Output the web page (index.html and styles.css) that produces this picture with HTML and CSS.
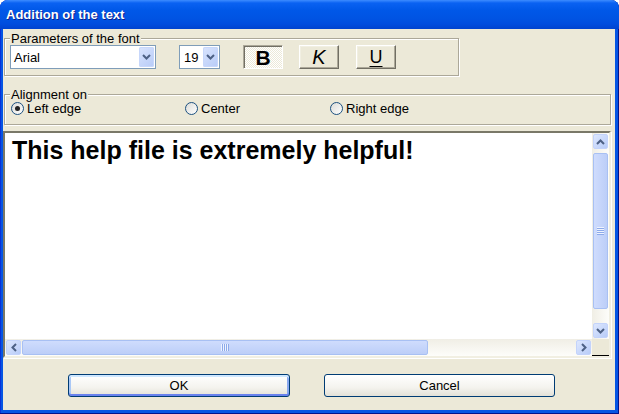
FILE: index.html
```html
<!DOCTYPE html>
<html lang="en">
<head>
  <meta charset="UTF-8">
  <title>Addition of the text</title>
  <link rel="stylesheet" href="styles.css">
</head>
<body>

  <div class="window">
    <div class="titlebar">Addition of the text</div>

    <div class="client">

      <fieldset class="group group-font">
        <legend>Parameters of the font</legend>
        <div class="font-row">
          <div class="combo combo-face">
            <span class="combo-value">Arial</span>
            <span class="combo-btn">
              <svg width="9" height="6" viewBox="0 0 9 6"><polyline points="1,1 4.5,4.5 8,1" fill="none" stroke="#4d6185" stroke-width="2"/></svg>
            </span>
          </div>
          <div class="combo combo-size">
            <span class="combo-value">19</span>
            <span class="combo-btn">
              <svg width="9" height="6" viewBox="0 0 9 6"><polyline points="1,1 4.5,4.5 8,1" fill="none" stroke="#4d6185" stroke-width="2"/></svg>
            </span>
          </div>
          <button class="tool tool-on tool-bold">B</button>
          <button class="tool tool-italic">K</button>
          <button class="tool tool-under">U</button>
        </div>
      </fieldset>

      <fieldset class="group group-align">
        <legend>Alignment on</legend>
        <div class="align-row">
          <label class="opt opt-left"><span class="radio checked"></span>Left edge</label>
          <label class="opt opt-center"><span class="radio"></span>Center</label>
          <label class="opt"><span class="radio"></span>Right edge</label>
        </div>
      </fieldset>

      <div class="editor">
        <div class="editor-text">This help file is extremely helpful!</div>

        <div class="vscroll">
          <span class="sb-btn">
            <svg width="9" height="6" viewBox="0 0 9 6"><polyline points="1,5 4.5,1.5 8,5" fill="none" stroke="#4d6185" stroke-width="2"/></svg>
          </span>
          <div class="vtrack">
            <div class="thumb vthumb"><span class="grip-v"></span></div>
          </div>
          <span class="sb-btn">
            <svg width="9" height="6" viewBox="0 0 9 6"><polyline points="1,1 4.5,4.5 8,1" fill="none" stroke="#4d6185" stroke-width="2"/></svg>
          </span>
        </div>

        <div class="hscroll">
          <span class="sb-btn">
            <svg width="6" height="9" viewBox="0 0 6 9"><polyline points="5,1 1.5,4.5 5,8" fill="none" stroke="#4d6185" stroke-width="2"/></svg>
          </span>
          <div class="htrack">
            <div class="thumb hthumb"><span class="grip-h"></span></div>
          </div>
          <span class="sb-btn">
            <svg width="6" height="9" viewBox="0 0 6 9"><polyline points="1,1 4.5,4.5 1,8" fill="none" stroke="#4d6185" stroke-width="2"/></svg>
          </span>
        </div>

        <div class="corner"></div>
      </div>

      <div class="actions">
        <button class="push push-ok">OK</button>
        <button class="push push-cancel">Cancel</button>
      </div>

    </div>
  </div>

</body>
</html>
```

FILE: styles.css
```css
body {
  margin: 0;
  background: #ffffff;
  font-family: 'Liberation Sans', Arial, sans-serif;
  font-size: 13px;
  color: #000;
}

button {
  font: inherit;
  color: inherit;
  padding: 0;
  margin: 0;
}

.window {
  width: 619px;
  height: 414px;
  display: flex;
  flex-direction: column;
  background: #0555e3;
  border-radius: 8px 8px 0 0;
  overflow: hidden;
  box-shadow: inset 0 -1px 0 #00138c, inset 1px 0 0 #0831d9, inset -1px 0 0 #00138c;
}

.titlebar {
  flex: none;
  height: 29px;
  padding-left: 6px;
  display: flex;
  align-items: center;
  color: #fff;
  font-weight: bold;
  font-size: 13px;
  text-shadow: 1px 1px 0 #0f1e8a;
  background: linear-gradient(to bottom, #3d8cff 0, #0a62f2 3px, #0058e8 10px, #0054e3 18px, #004dde 24px, #0043cf 29px);
}

.client {
  flex: 1;
  margin: 0 4px 4px 3px;
  background: #ece9d8;
  display: flex;
  flex-direction: column;
  align-items: flex-start;
  padding-top: 3px;
}

/* Group boxes */
.group {
  margin: 0 0 0 1px;
  padding: 0 5px 6px;
  border: 1px solid #aca899;
  box-shadow: inset 1px 1px 0 #fff, 1px 1px 0 #fff;
  min-inline-size: 0;
  box-sizing: border-box;
}

.group legend {
  padding: 0 1px;
  line-height: 13px;
  background: #ece9d8;
}

.group-font {
  width: 455px;
}

.group-align {
  width: 607px;
  margin-top: 12px;
  padding-bottom: 8px;
}

/* Font row */
.font-row {
  display: flex;
  align-items: center;
  height: 24px;
}

.combo {
  height: 24px;
  box-sizing: border-box;
  border: 1px solid #7f9db9;
  background: #fff;
  display: flex;
  align-items: center;
}

.combo-face {
  width: 146px;
}

.combo-size {
  width: 41px;
  margin-left: 23px;
}

.combo-value {
  flex: 1;
  padding-left: 3px;
}

.combo-size .combo-value {
  padding-left: 4px;
}

.combo-btn {
  width: 15px;
  height: 20px;
  margin-right: 1px;
  border-radius: 2px;
  background: linear-gradient(135deg, #d9e4fd, #b7cbf8);
  box-shadow: inset 0 0 0 1px #c7d7fb;
  display: flex;
  align-items: center;
  justify-content: center;
}

.tool {
  width: 40px;
  height: 24px;
  box-sizing: border-box;
  background: #ece9d8;
  border: 1px solid;
  border-color: #fff #716f64 #716f64 #fff;
  box-shadow: inset -1px -1px 0 #aca899, inset 1px 1px 0 #f1efe2;
  display: flex;
  align-items: center;
  justify-content: center;
}

.tool-on {
  margin-left: 23px;
  border-color: #aca899 #fff #fff #aca899;
  box-shadow: inset 1px 1px 0 #716f64;
  background: repeating-conic-gradient(#ffffff 0 25%, #ece9d8 0 50%) 0 0 / 2px 2px;
}

.tool-bold {
  font-weight: bold;
  font-size: 21px;
  padding-top: 1px;
}

.tool-italic {
  margin-left: 16px;
  font-style: italic;
  font-size: 20px;
}

.tool-under {
  margin-left: 17px;
  font-size: 18px;
  text-decoration: underline;
  text-underline-offset: 3px;
}

/* Alignment */
.align-row {
  display: flex;
  line-height: 15px;
}

.opt {
  display: flex;
  align-items: center;
  margin-left: 1px;
}

.opt-left {
  width: 174px;
}

.opt-center {
  width: 145px;
  margin-left: 0;
}

.opt + .opt {
  margin-left: 0;
}

.radio {
  width: 13px;
  height: 13px;
  box-sizing: border-box;
  margin-right: 3px;
  border: 1px solid #1c5180;
  border-radius: 50%;
  background: linear-gradient(135deg, #dcdcd7, #ffffff);
  display: flex;
  align-items: center;
  justify-content: center;
}

.radio.checked::after {
  content: "";
  width: 5px;
  height: 5px;
  border-radius: 50%;
  background: #222;
}

/* Editor with scrollbars */
.editor {
  width: 608px;
  height: 227px;
  margin-top: 6px;
  box-sizing: border-box;
  border: 2px solid;
  border-color: #7a7868 #f1efe2 #f1efe2 #7a7868;
  box-shadow: 1px 1px 0 #fff;
  background: #fff;
  display: grid;
  grid-template-columns: 1fr 17px;
  grid-template-rows: 1fr 17px;
}

.editor-text {
  padding: 3px 7px;
  font-weight: bold;
  font-size: 25px;
  white-space: nowrap;
  overflow: hidden;
}

.vscroll,
.hscroll {
  display: flex;
  background: linear-gradient(to right, #f0eee5, #fdfdfa);
}

.vscroll {
  flex-direction: column;
}

.hscroll {
  background: linear-gradient(to bottom, #f0eee5, #fdfdfa);
}

.sb-btn {
  flex: none;
  width: 15px;
  height: 15px;
  margin: 1px;
  box-sizing: border-box;
  border-radius: 2px;
  border: 1px solid #c3d3fb;
  background: linear-gradient(135deg, #dde7fe, #b8ccf8);
  display: flex;
  align-items: center;
  justify-content: center;
}

.vtrack,
.htrack {
  flex: 1;
  display: flex;
}

.vtrack {
  flex-direction: column;
}

.thumb {
  box-sizing: border-box;
  border: 1px solid #a8c0f3;
  border-radius: 2px;
  display: flex;
  align-items: center;
  justify-content: center;
}

.vthumb {
  height: 156px;
  margin: 3px 1px 0;
  background: linear-gradient(to right, #cfdcfd, #bccef8);
}

.hthumb {
  width: 406px;
  margin: 1px 0;
  background: linear-gradient(to bottom, #cfdcfd, #bccef8);
}

.grip-v {
  width: 7px;
  height: 8px;
  background: repeating-linear-gradient(to bottom, #eef3fe 0 1px, #8daaea 1px 2px);
}

.grip-h {
  width: 8px;
  height: 7px;
  background: repeating-linear-gradient(to right, #eef3fe 0 1px, #8daaea 1px 2px);
}

.corner {
  background: #ece9d8;
  border-bottom: 1px solid #000;
}

/* Dialog buttons */
.actions {
  display: flex;
  gap: 34px;
  margin-top: 16px;
  padding-left: 65px;
}

.push {
  height: 23px;
  box-sizing: border-box;
  border: 1px solid #003c74;
  border-radius: 3px;
  background: linear-gradient(to bottom, #ffffff, #f4f3ee 60%, #e3e1d8);
}

.push-ok {
  width: 222px;
  box-shadow: inset 0 2px 0 #cee7ff, inset 0 -2px 0 #6982ee, inset 2px 0 0 #aac8f6, inset -2px 0 0 #89a8ef;
}

.push-cancel {
  width: 231px;
}
```
